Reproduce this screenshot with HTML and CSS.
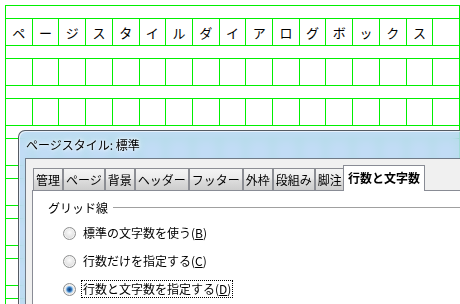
FILE: index.html
```html
<!DOCTYPE html>
<html lang="ja">
<head>
<meta charset="utf-8">
<link rel="stylesheet" href="styles.css">
</head>
<body>
<div class="sheet">
  <div class="band"></div>
  <div class="row">
    <div class="cell">ペ</div><div class="cell">ー</div><div class="cell">ジ</div><div class="cell">ス</div><div class="cell">タ</div><div class="cell">イ</div><div class="cell">ル</div><div class="cell">ダ</div><div class="cell">イ</div><div class="cell">ア</div><div class="cell">ロ</div><div class="cell">グ</div><div class="cell">ボ</div><div class="cell">ッ</div><div class="cell">ク</div><div class="cell">ス</div><div class="cell"></div>
  </div>
  <div class="band"></div>
  <div class="row"><div class="cell"></div><div class="cell"></div><div class="cell"></div><div class="cell"></div><div class="cell"></div><div class="cell"></div><div class="cell"></div><div class="cell"></div><div class="cell"></div><div class="cell"></div><div class="cell"></div><div class="cell"></div><div class="cell"></div><div class="cell"></div><div class="cell"></div><div class="cell"></div><div class="cell"></div></div>
  <div class="band"></div>
  <div class="row"><div class="cell"></div><div class="cell"></div><div class="cell"></div><div class="cell"></div><div class="cell"></div><div class="cell"></div><div class="cell"></div><div class="cell"></div><div class="cell"></div><div class="cell"></div><div class="cell"></div><div class="cell"></div><div class="cell"></div><div class="cell"></div><div class="cell"></div><div class="cell"></div><div class="cell"></div></div>
  <div class="band"></div>
  <div class="row"><div class="cell"></div><div class="cell"></div><div class="cell"></div><div class="cell"></div><div class="cell"></div><div class="cell"></div><div class="cell"></div><div class="cell"></div><div class="cell"></div><div class="cell"></div><div class="cell"></div><div class="cell"></div><div class="cell"></div><div class="cell"></div><div class="cell"></div><div class="cell"></div><div class="cell"></div></div>
  <div class="band"></div>
  <div class="row"><div class="cell"></div><div class="cell"></div><div class="cell"></div><div class="cell"></div><div class="cell"></div><div class="cell"></div><div class="cell"></div><div class="cell"></div><div class="cell"></div><div class="cell"></div><div class="cell"></div><div class="cell"></div><div class="cell"></div><div class="cell"></div><div class="cell"></div><div class="cell"></div><div class="cell"></div></div>
  <div class="band"></div>
  <div class="row"><div class="cell"></div><div class="cell"></div><div class="cell"></div><div class="cell"></div><div class="cell"></div><div class="cell"></div><div class="cell"></div><div class="cell"></div><div class="cell"></div><div class="cell"></div><div class="cell"></div><div class="cell"></div><div class="cell"></div><div class="cell"></div><div class="cell"></div><div class="cell"></div><div class="cell"></div></div>
  <div class="band"></div>
  <div class="row"><div class="cell"></div><div class="cell"></div><div class="cell"></div><div class="cell"></div><div class="cell"></div><div class="cell"></div><div class="cell"></div><div class="cell"></div><div class="cell"></div><div class="cell"></div><div class="cell"></div><div class="cell"></div><div class="cell"></div><div class="cell"></div><div class="cell"></div><div class="cell"></div><div class="cell"></div></div>
  <div class="band"></div>
  <div class="row"><div class="cell"></div><div class="cell"></div><div class="cell"></div><div class="cell"></div><div class="cell"></div><div class="cell"></div><div class="cell"></div><div class="cell"></div><div class="cell"></div><div class="cell"></div><div class="cell"></div><div class="cell"></div><div class="cell"></div><div class="cell"></div><div class="cell"></div><div class="cell"></div><div class="cell"></div></div>
</div>

<div class="dialog">
  <div class="title">ページスタイル: 標準</div>
  <div class="client">
    <div class="tabs">
      <div class="tab">管理</div>
      <div class="tab">ページ</div>
      <div class="tab">背景</div>
      <div class="tab">ヘッダー</div>
      <div class="tab">フッター</div>
      <div class="tab">外枠</div>
      <div class="tab">段組み</div>
      <div class="tab">脚注</div>
      <div class="tab selected">行数と文字数</div>
    </div>
    <div class="panel">
      <div class="group">
        <span class="group-label">グリッド線</span>
        <span class="group-line"></span>
      </div>
      <div class="option">
        <span class="radio"></span>
        <span class="label">標準の文字数を使う(<u>B</u>)</span>
      </div>
      <div class="option">
        <span class="radio"></span>
        <span class="label">行数だけを指定する(<u>C</u>)</span>
      </div>
      <div class="option">
        <span class="radio checked"></span>
        <span class="label focus">行数と文字数を指定する(<u>D</u>)</span>
      </div>
    </div>
  </div>
</div>
</body>
</html>
```

FILE: styles.css
```css
html, body {
  margin: 0;
  padding: 0;
  background: #ffffff;
  overflow: hidden;
  width: 460px;
  height: 304px;
}

body {
  position: relative;
  font-family: "Noto Sans CJK JP", "Noto Sans", sans-serif;
}

.sheet {
  padding: 5px 0 0 5px;
  width: 455px;
  height: 299px;
  overflow: hidden;
}

.band {
  height: 12px;
  border: 1px solid #00f000;
  border-bottom: 0;
}

.row {
  display: grid;
  grid-template-columns: repeat(17, 1fr);
  height: 26px;
  border-top: 1px solid #00f000;
  border-right: 1px solid #00f000;
}

.cell {
  border-left: 1px solid #00f000;
  display: flex;
  align-items: center;
  justify-content: center;
  font-size: 13px;
  color: #000;
  line-height: 1;
}

.dialog {
  position: absolute;
  left: 18px;
  top: 130px;
  width: 442px;
  height: 174px;
  overflow: hidden;
  box-sizing: border-box;
  border: 1px solid #555b63;
  border-right: 0;
  border-bottom: 0;
  border-radius: 7px 0 0 0;
  background: rgba(176, 210, 242, 0.78);
  -webkit-backdrop-filter: blur(4px);
  backdrop-filter: blur(4px);
  box-shadow: inset 1px 1px 0 0 rgba(255, 255, 255, 0.6);
  padding: 0 0 0 6px;
}

.title {
  height: 27px;
  line-height: 27px;
  padding-left: 1px;
  font-size: 12px;
  color: #000;
  text-shadow: 0 0 6px #fff, 0 0 3px #fff;
}

.client {
  border: 1px solid #6f7a87;
  border-right: 0;
  border-bottom: 0;
  background: #f0f0f0;
  height: 146px;
  padding: 6px 0 0 6px;
}

.tabs {
  display: flex;
  align-items: flex-end;
  height: 25px;
  margin-left: 1px;
  position: relative;
  z-index: 1;
}

.tab {
  height: 21px;
  line-height: 21px;
  padding: 0 2px;
  border: 1px solid #8c8e94;
  border-bottom: 0;
  font-size: 12px;
  color: #000;
  background: linear-gradient(#f4f4f4, #ebebeb 45%, #dcdcdc 55%, #cdcdcd);
}

.tab.selected {
  height: 25px;
  line-height: 24px;
  margin-left: -2px;
  margin-bottom: -1px;
  padding: 0 4px;
  background: #ffffff;
  border-color: #898c95;
  font-weight: bold;
}

.panel {
  background: #ffffff;
  border: 1px solid #898c95;
  border-right: 0;
  border-bottom: 0;
  height: 115px;
  padding: 9px 0 0 15px;
}

.group {
  display: flex;
  align-items: center;
  height: 16px;
  font-size: 12px;
  color: #000;
}

.group-label {
  line-height: 16px;
}

.group-line {
  flex: 1;
  height: 1px;
  margin: 0 0 2px 5px;
  background: #a0a0a0;
}

.option {
  display: flex;
  align-items: center;
  height: 28px;
  margin-left: 15px;
  font-size: 12px;
  color: #000;
}

.group + .option {
  margin-top: 3px;
}

.radio {
  width: 11px;
  height: 11px;
  border: 1px solid #8e8f8f;
  border-radius: 50%;
  background: radial-gradient(circle at 50% 40%, #fbfbfb 0, #e8e8e8 45%, #cfcfcf 100%);
  box-shadow: inset 0 0 0 1px #f4f4f4;
  margin-right: 5px;
  flex: none;
}

.radio.checked {
  background:
    radial-gradient(circle at 50% 50%, #0e3f78 0, #2f6fb4 2px, #7fb2e0 3px, #b9d7f0 3.6px, rgba(0,0,0,0) 4px),
    radial-gradient(circle at 50% 40%, #fbfbfb 0, #e8e8e8 45%, #cfcfcf 100%);
}

.label {
  line-height: 16px;
  padding: 0 1px;
  border: 1px solid transparent;
}

.label.focus {
  border: 1px dotted #000;
}
```
